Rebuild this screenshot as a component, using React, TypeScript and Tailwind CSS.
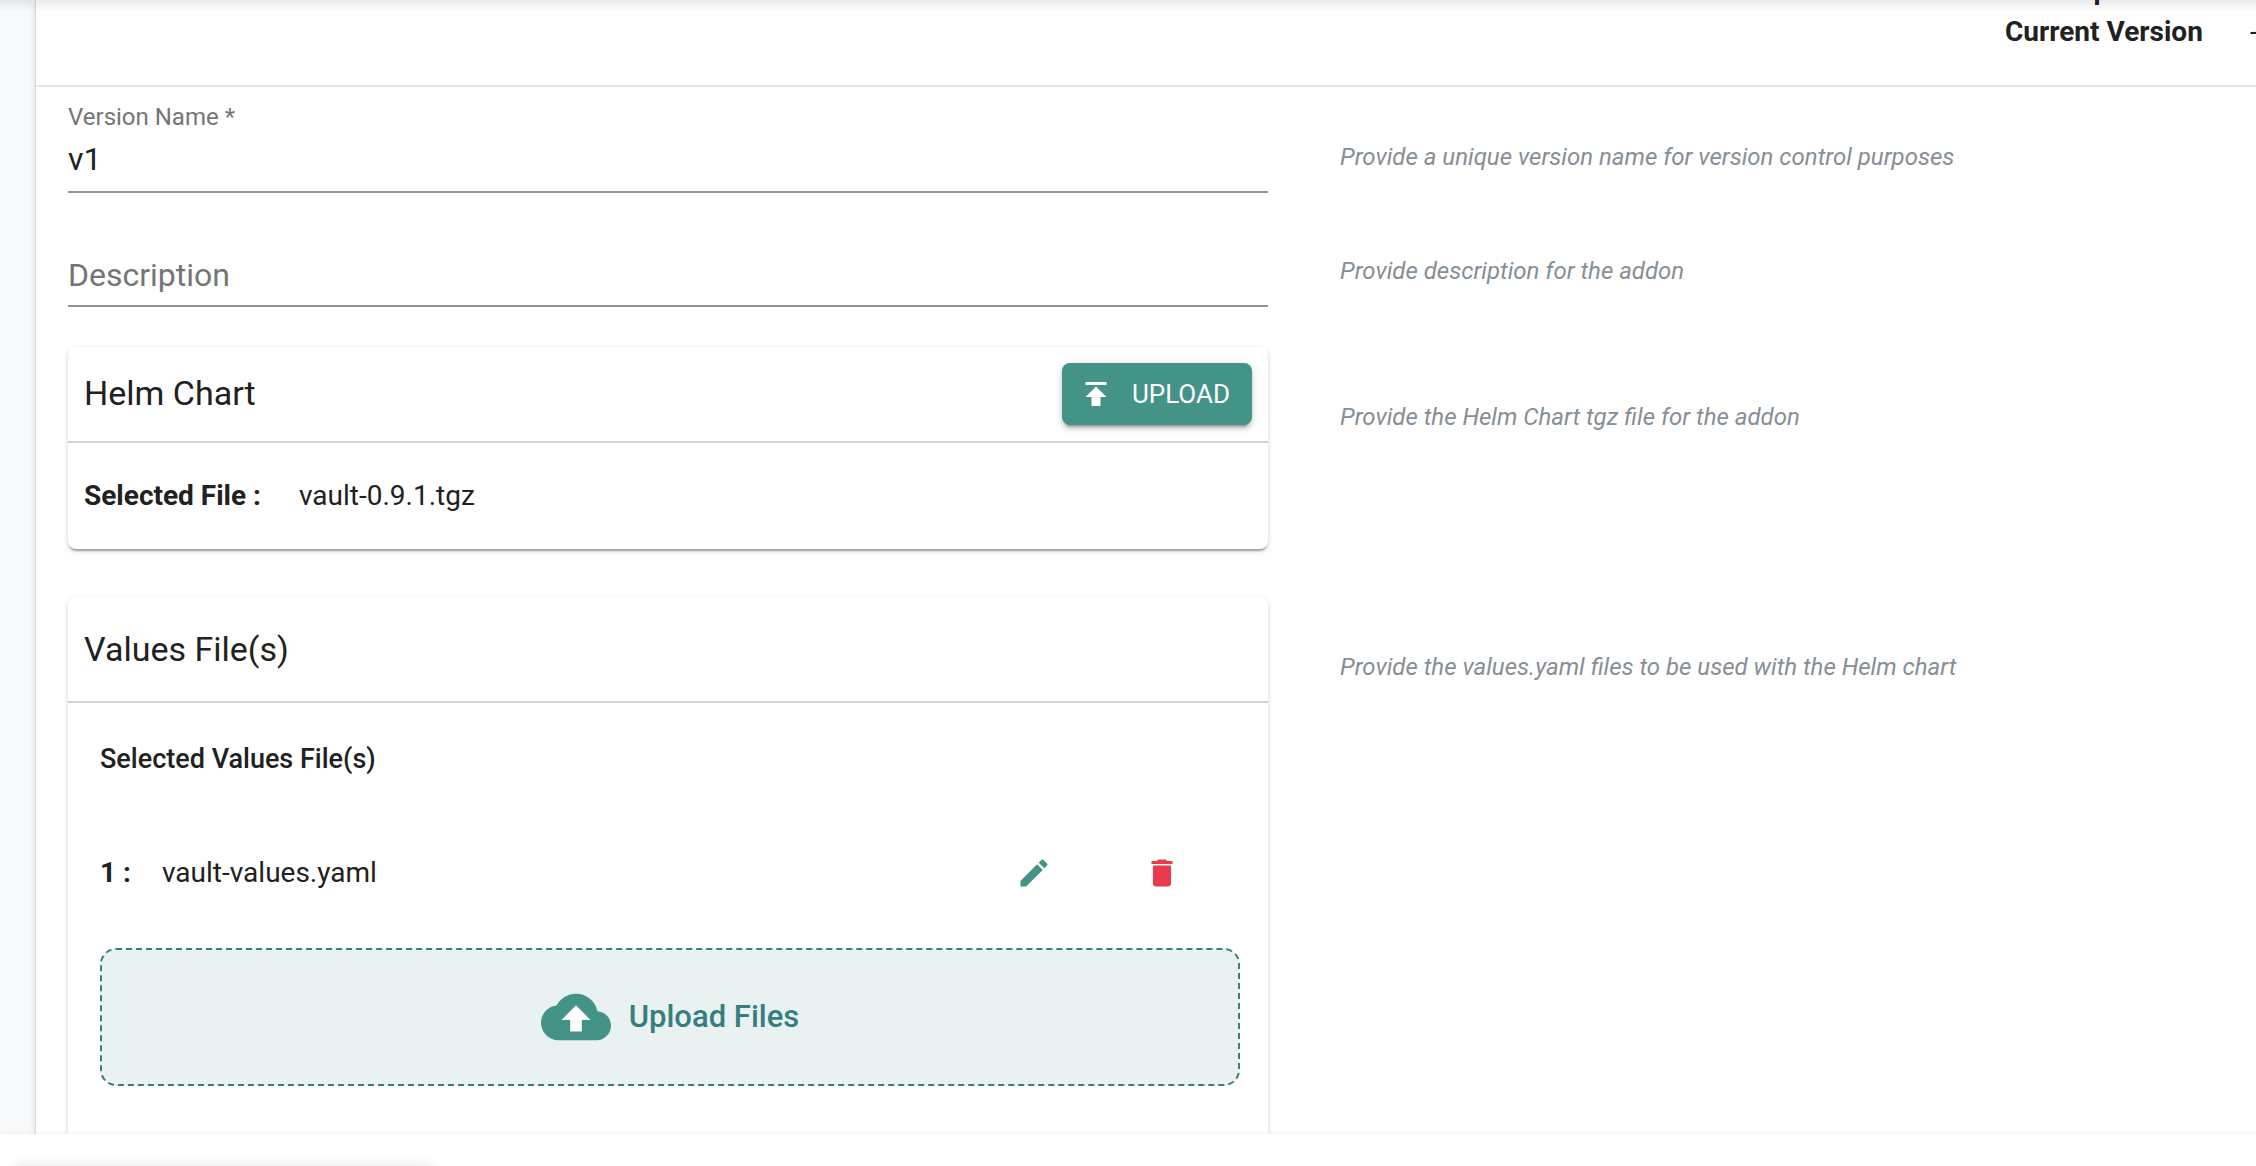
import { useState, type ReactNode } from "react";

function Hint({ children, className }: { children: ReactNode; className: string }) {
  return <p className={`text-[24px] leading-8 italic text-[#868e96] ${className}`}>{children}</p>;
}

function Row({ children, hint, hintClass }: { children: ReactNode; hint: string; hintClass: string }) {
  return (
    <div className="grid grid-cols-[1200fr_916fr] gap-18">
      <div className="min-w-0">{children}</div>
      <Hint className={hintClass}>{hint}</Hint>
    </div>
  );
}

const card =
  "rounded-lg bg-white shadow-[0_4px_2px_-2px_rgba(0,0,0,0.2),0_2px_2px_rgba(0,0,0,0.14),0_2px_6px_rgba(0,0,0,0.12)]";

export default function App() {
  const [name, setName] = useState("v1");
  const [description, setDescription] = useState("");

  return (
    <div className="flex h-screen flex-col overflow-hidden bg-white font-[Roboto,sans-serif] text-[#212121]">
      <div className="relative flex min-h-0 flex-1 overflow-hidden bg-[#f8f9fb]">
        <div className="pointer-events-none absolute inset-x-0 top-0 z-10 h-3 bg-linear-to-b from-black/8 to-transparent" />
        <main className="ml-9 flex-1 bg-white shadow-[0_0_2px_rgba(0,0,0,0.25),0_2px_8px_rgba(0,0,0,0.12)]">
          <header className="flex h-[87px] items-end justify-end overflow-hidden border-b-2 border-[#e5e5e5] pb-8">
            <dl className="grid grid-cols-[245px_6px] text-[28px] leading-[42px]">
              <dt className="font-bold">Namespace</dt>
              <dd />
              <dt className="font-bold">Current Version</dt>
              <dd className="whitespace-nowrap">-</dd>
            </dl>
          </header>

          <form className="pl-8" onSubmit={(e) => e.preventDefault()}>
            <Row hint="Provide a unique version name for version control purposes" hintClass="pt-[54px]">
              <div className="border-b-2 border-[#949494] pt-[14px]">
                <label htmlFor="version" className="block text-[24px] leading-8 text-[#757575]">
                  Version Name *
                </label>
                <input
                  id="version"
                  required
                  value={name}
                  onChange={(e) => setName(e.target.value)}
                  className="block h-[58px] w-full bg-transparent pb-1.5 text-[32px] outline-none"
                />
              </div>
            </Row>

            <Row hint="Provide description for the addon" hintClass="pt-[62px]">
              <div className="border-b-2 border-[#949494] pt-14">
                <input
                  aria-label="Description"
                  placeholder="Description"
                  value={description}
                  onChange={(e) => setDescription(e.target.value)}
                  className="block h-14 w-full bg-transparent pb-1 text-[32px] outline-none placeholder:text-[#757575]"
                />
              </div>
            </Row>

            <Row hint="Provide the Helm Chart tgz file for the addon" hintClass="pt-[94px]">
              <section className={`mt-10 ${card}`}>
                <div className="flex h-24 items-center justify-between border-b-2 border-[#d2d2d2] px-4">
                  <h2 className="pb-0.5 text-[34px] leading-10">Helm Chart</h2>
                  <button
                    type="button"
                    className="flex h-[62px] items-center gap-[18px] rounded-lg bg-[#439486] pr-[22px] pl-4 text-[26px] text-white shadow-[0_6px_2px_-4px_rgba(0,0,0,0.2),0_4px_4px_rgba(0,0,0,0.14),0_2px_10px_rgba(0,0,0,0.12)]"
                  >
                    <svg viewBox="0 0 24 24" className="size-9 fill-current" aria-hidden="true">
                      <path d="M5 4v2h14V4H5zm0 10h4v6h6v-6h4l-7-7-7 7z" />
                    </svg>
                    UPLOAD
                  </button>
                </div>
                <div className="flex h-[106px] items-center gap-[38px] px-4 text-[28px]">
                  <strong className="font-bold">Selected File :</strong>
                  <span>vault-0.9.1.tgz</span>
                </div>
              </section>
            </Row>

            <Row hint="Provide the values.yaml files to be used with the Helm chart" hintClass="pt-[102px]">
              <section className={`mt-12 pb-20 ${card}`}>
                <div className="flex h-[106px] items-center border-b-2 border-[#d2d2d2] px-4">
                  <h2 className="text-[34px] leading-10">Values File(s)</h2>
                </div>
                <div className="pt-8 pr-7 pl-8">
                  <h3 className="text-[27px] leading-12 font-medium">Selected Values File(s)</h3>
                  <div className="mt-[62px] flex h-14 items-center text-[28px]">
                    <strong className="w-[62px] font-bold">1 :</strong>
                    <span className="flex-1">vault-values.yaml</span>
                    <button type="button" aria-label="Edit vault-values.yaml" className="mr-23 text-[#439486]">
                      <svg viewBox="0 0 24 24" className="size-9 fill-current" aria-hidden="true">
                        <path d="M3 17.25V21h3.75L17.81 9.94l-3.75-3.75L3 17.25zM20.71 7.04c.39-.39.39-1.02 0-1.41l-2.34-2.34a.996.996 0 0 0-1.41 0l-1.83 1.83 3.75 3.75 1.83-1.83z" />
                      </svg>
                    </button>
                    <button type="button" aria-label="Delete vault-values.yaml" className="mr-15 text-[#eb3b4a]">
                      <svg viewBox="0 0 24 24" className="size-9 fill-current" aria-hidden="true">
                        <path d="M6 19c0 1.1.9 2 2 2h8c1.1 0 2-.9 2-2V7H6v12zM19 4h-3.5l-1-1h-5l-1 1H5v2h14V4z" />
                      </svg>
                    </button>
                  </div>
                  <button
                    type="button"
                    className="mt-[47px] flex h-[138px] w-full items-center justify-center gap-[18px] rounded-2xl border-2 border-dashed border-[#367f7e] bg-[#e9f2f0] text-[31px] font-medium text-[#367f7e]"
                  >
                    <svg viewBox="0 0 24 24" className="size-[70px] fill-[#439486]" aria-hidden="true">
                      <path d="M19.35 10.04C18.67 6.59 15.64 4 12 4 9.11 4 6.6 5.64 5.35 8.04 2.34 8.36 0 10.91 0 14c0 3.31 2.69 6 6 6h13c2.76 0 5-2.24 5-5 0-2.64-2.05-4.78-4.65-4.96z" />
                      <path d="M14 13v4h-4v-4H7l5-5 5 5h-3z" className="fill-white" />
                    </svg>
                    Upload Files
                  </button>
                </div>
              </section>
            </Row>
          </form>
        </main>
      </div>
      <footer className="relative z-10 flex h-8 shrink-0 items-end bg-white shadow-[0_0_4px_rgba(0,0,0,0.08)]">
        <div className="ml-4 h-0 w-[414px] shadow-[0_4px_12px_2px_rgba(0,0,0,0.25)]" />
      </footer>
    </div>
  );
}
